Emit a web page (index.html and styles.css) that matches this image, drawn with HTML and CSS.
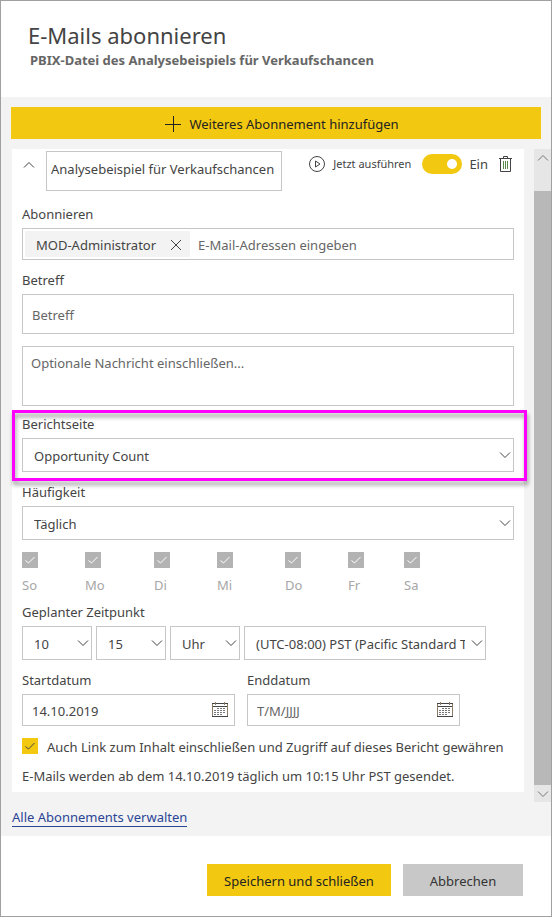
FILE: index.html
```html
<!DOCTYPE html>
<html lang="de">
<head>
<meta charset="utf-8">
<meta name="viewport" content="width=device-width, initial-scale=1">
<title>E-Mails abonnieren</title>
<link rel="stylesheet" href="styles.css">
</head>
<body>
<svg class="defs" aria-hidden="true">
  <symbol id="chevron" viewBox="0 0 12 8"><path d="M1 1.5l5 5 5-5"/></symbol>
  <symbol id="check" viewBox="0 0 16 16"><path d="M3.5 8.5l3 2.5 6-6"/></symbol>
  <symbol id="calendar" viewBox="0 0 18 16">
    <path d="M1 1.500h16M1 4.500h16M1 14.500h16"/>
    <path class="sides" d="M1.500 2v12M16.500 2v12M4.500 0v3M13.500 0v3"/>
    <path class="dots" d="M6 6.500h9M3 8.500h12M3 10.500h12M3 12.500h9" stroke-dasharray="2 1"/>
  </symbol>
</svg>
<main class="dialog">
  <header class="dialog-header">
    <h1>E-Mails abonnieren</h1>
    <h2>PBIX-Datei des Analysebeispiels für Verkaufschancen</h2>
  </header>

  <div class="dialog-body">
    <button type="button" class="button primary add">
      <svg width="16" height="16" viewBox="0 0 16 16"><path d="M8.500 0v16M0 8.500h16"/></svg>
      Weiteres Abonnement hinzufügen
    </button>

    <div class="panel">
      <form class="card">
        <div class="card-head">
          <button type="button" class="icon-button collapse" aria-label="Einklappen"><svg class="flip" width="12" height="8"><use href="#chevron"/></svg></button>
          <input class="box name" type="text" aria-label="Name" value="Analysebeispiel für Verkaufschancen">
          <div class="actions">
            <button type="button" class="run">
              <svg width="16" height="16" viewBox="0 0 16 16"><circle cx="8" cy="8" r="7.500"/><path d="M6.500 5l4.500 3-4.500 3z"/></svg>
              Jetzt ausführen
            </button>
            <label class="switch"><input type="checkbox" role="switch" checked>Ein</label>
            <button type="button" class="icon-button" aria-label="Löschen">
              <svg width="13" height="16" viewBox="0 0 13 16"><path d="M0 2.500h13M4.500 2.500v-2h4v2M1.500 2.500v13h10v-13"/><path class="bars" d="M4.500 5v8M6.500 5v8M8.500 5v8"/></svg>
            </button>
          </div>
        </div>

        <div class="field">
          <label for="mail">Abonnieren</label>
          <div class="box recipients">
            <span class="chip">MOD-Administrator
              <button type="button" class="icon-button" aria-label="Entfernen"><svg width="12" height="12" viewBox="0 0 12 12"><path d="M1 1l10 10M11 1L1 11"/></svg></button>
            </span>
            <input id="mail" type="text" placeholder="E-Mail-Adressen eingeben">
          </div>
        </div>

        <div class="field">
          <label for="subject">Betreff</label>
          <input class="box subject" id="subject" type="text" placeholder="Betreff">
        </div>
        <textarea class="box message" aria-label="Nachricht" placeholder="Optionale Nachricht einschließen..."></textarea>

        <div class="field highlighted">
          <label for="page">Berichtseite</label>
          <div class="select"><select class="box" id="page"><option>Opportunity Count</option></select><svg width="12" height="8"><use href="#chevron"/></svg></div>
        </div>

        <div class="field">
          <label for="frequency">Häufigkeit</label>
          <div class="select"><select class="box" id="frequency"><option>Täglich</option></select><svg width="12" height="8"><use href="#chevron"/></svg></div>
        </div>

        <div class="days">
          <label class="day"><span class="tick"><input type="checkbox" checked disabled><svg><use href="#check"/></svg></span>So</label>
          <label class="day"><span class="tick"><input type="checkbox" checked disabled><svg><use href="#check"/></svg></span>Mo</label>
          <label class="day"><span class="tick"><input type="checkbox" checked disabled><svg><use href="#check"/></svg></span>Di</label>
          <label class="day"><span class="tick"><input type="checkbox" checked disabled><svg><use href="#check"/></svg></span>Mi</label>
          <label class="day"><span class="tick"><input type="checkbox" checked disabled><svg><use href="#check"/></svg></span>Do</label>
          <label class="day"><span class="tick"><input type="checkbox" checked disabled><svg><use href="#check"/></svg></span>Fr</label>
          <label class="day"><span class="tick"><input type="checkbox" checked disabled><svg><use href="#check"/></svg></span>Sa</label>
        </div>

        <div class="field">
          <label for="hour">Geplanter Zeitpunkt</label>
          <div class="times">
            <div class="select"><select class="box" id="hour"><option>10</option></select><svg width="12" height="8"><use href="#chevron"/></svg></div>
            <div class="select"><select class="box" aria-label="Minute"><option>15</option></select><svg width="12" height="8"><use href="#chevron"/></svg></div>
            <div class="select"><select class="box" aria-label="Format"><option>Uhr</option></select><svg width="12" height="8"><use href="#chevron"/></svg></div>
            <div class="select zone"><select class="box" aria-label="Zeitzone"><option>(UTC-08:00) PST (Pacific Standard Time)</option></select><svg width="12" height="8"><use href="#chevron"/></svg></div>
          </div>
        </div>

        <div class="dates">
          <div class="field">
            <label for="start">Startdatum</label>
            <div class="box date"><input id="start" type="text" value="14.10.2019"><button type="button" class="icon-button" aria-label="Startdatum wählen"><svg width="18" height="16"><use href="#calendar"/></svg></button></div>
          </div>
          <div class="field">
            <label for="end">Enddatum</label>
            <div class="box date"><input id="end" type="text" placeholder="T/M/JJJJ"><button type="button" class="icon-button" aria-label="Enddatum wählen"><svg width="18" height="16"><use href="#calendar"/></svg></button></div>
          </div>
        </div>

        <label class="access"><span class="tick"><input type="checkbox" checked><svg><use href="#check"/></svg></span>Auch Link zum Inhalt einschließen und Zugriff auf dieses Bericht gewähren</label>
        <p class="summary">E-Mails werden ab dem 14.10.2019 täglich um 10:15 Uhr PST gesendet.</p>
      </form>

      <div class="scrollbar">
        <button type="button" class="icon-button" aria-label="Nach oben"><svg class="flip" width="10" height="6"><use href="#chevron"/></svg></button>
        <div class="thumb"></div>
        <button type="button" class="icon-button" aria-label="Nach unten"><svg width="10" height="6"><use href="#chevron"/></svg></button>
      </div>
    </div>

    <a class="manage" href="#">Alle Abonnements verwalten</a>
  </div>

  <footer class="dialog-footer">
    <button type="button" class="button primary save">Speichern und schließen</button>
    <button type="button" class="button cancel">Abbrechen</button>
  </footer>
</main>
</body>
</html>
```
FILE: styles.css
```css
* { box-sizing: border-box; }

body {
  margin: 0;
  font: 13px/20px "Noto Sans", "Open Sans", sans-serif;
  color: #444;
}

button, input, select, textarea { font: inherit; color: inherit; margin: 0; }
button { border: 0; padding: 0; background: none; cursor: pointer; }
svg { display: block; fill: none; stroke: #444; }
.defs { position: absolute; width: 0; height: 0; }
.flip { transform: rotate(180deg); }

.dialog {
  min-height: 100vh;
  display: flex;
  flex-direction: column;
  border: 1px solid #a0a0a0;
  background: #fff;
}

.dialog-header { padding: 18px 27px 28px; }
h1 { margin: 0; font-size: 22px; line-height: 32px; font-weight: 400; }
h2 { margin: 0 2px; font-size: 13px; line-height: 18px; font-weight: 700; color: #666; }

.dialog-body { padding: 10px 0 8px 10px; background: #f3f3f3; }

.button { height: 32px; color: #333; }
.primary { background: #f2c811; color: #222; }
.add {
  display: flex;
  align-items: center;
  justify-content: center;
  gap: 8px;
  width: calc(100% - 10px);
  padding: 2px 0 0 12px;
}
.add svg { stroke: #222; }

.panel { display: flex; gap: 10px; margin: 10px 0 5px 1px; }
.card { flex: 1; min-width: 0; margin-bottom: 10px; padding: 2px 10px 6px; background: #fff; }

.box {
  width: 100%;
  border: 1px solid #c6c6c6;
  border-radius: 0;
  background: #fff;
  outline: 0;
}
::placeholder { color: #666; opacity: 1; }

.icon-button { display: grid; place-items: center; }

.card-head { display: flex; align-items: flex-start; }
.collapse { width: 14px; height: 28px; margin-right: 10px; }
.name { width: 236px; height: 40px; padding: 0 4px 4px; }
.actions { display: flex; align-items: center; gap: 11px; height: 26px; margin-left: auto; }
.run { display: flex; align-items: center; gap: 8px; font-size: 11px; }
.switch { display: flex; align-items: center; gap: 7px; }
.switch input {
  appearance: none;
  display: grid;
  align-items: center;
  justify-content: end;
  width: 40px;
  height: 20px;
  padding-right: 5px;
  border-radius: 10px;
  background: #f2c811;
}
.switch input::before { content: ""; width: 10px; height: 10px; border-radius: 50%; background: #fff; }
.actions .icon-button { margin-right: 2px; }
.bars { stroke: #5a8a4a; }
.sides { stroke: #8a7a66; }
.dots { stroke: #777; }

.field { display: flex; flex-direction: column; gap: 4px; margin-top: 10px; }
.card-head + .field { margin-top: 13px; }

.recipients { display: flex; height: 32px; padding: 2px; }
.recipients input { flex: 1; min-width: 0; padding: 2px 8px 0; border: 0; outline: 0; }
.chip { display: flex; align-items: center; gap: 14px; padding: 2px 8px 0 11px; background: #f3f3f3; }

.subject { height: 40px; padding: 2px 9px 0; }
.message { display: block; height: 60px; margin-top: 12px; padding: 6px 8px; resize: none; }

.highlighted { position: relative; margin-top: 8px; }
.highlighted::after {
  content: "";
  position: absolute;
  inset: -4px -13px -9px -10px;
  border: 3px solid #f0f;
  filter: drop-shadow(1px 4px 2px rgba(0, 0, 0, 0.4));
  pointer-events: none;
}

.select { display: grid; align-items: center; }
.select > * { grid-area: 1 / 1; }
.select select { appearance: none; height: 34px; padding: 1px 20px 0 11px; }
.select svg { justify-self: end; margin-right: 3px; pointer-events: none; }

.tick { display: grid; width: 16px; height: 16px; }
.tick > * { grid-area: 1 / 1; width: 16px; height: 16px; margin: 0; }
.tick input { appearance: none; background: #f2c811; }
.tick input:disabled { background: #b3b3b3; }
.tick input:disabled + svg { stroke: #fff; }

.days {
  display: grid;
  grid-template-columns: 63fr 69fr 63fr 68fr 63fr 56fr 110fr;
  margin-top: 12px;
  color: #a6a6a6;
}
.day { display: flex; flex-direction: column; gap: 7px; }
.days + .field { margin-top: 7px; }

.times { display: flex; gap: 4px; }
.times .select { width: 70px; }
.times .zone { width: 242px; }

.dates { display: flex; gap: 12px; }
.dates .field { width: 213px; }
.date { display: flex; align-items: center; height: 32px; padding: 0 5px 0 9px; }
.date input { flex: 1; min-width: 0; padding: 2px 0 0; border: 0; outline: 0; }

.access { display: flex; gap: 9px; margin-top: 12px; line-height: 18px; }
.summary { margin: 10px 0 0; }

.scrollbar { display: flex; flex-direction: column; flex: 0 0 17px; background: #e6e6e6; }
.scrollbar .icon-button { height: 17px; }
.scrollbar svg { width: 12px; height: 8px; stroke: #777; }
.thumb { flex: 1; margin-top: 25px; background: #b8b8b8; }

.manage {
  display: inline-block;
  margin: 0 1px 1px;
  border-bottom: 1px solid #2b4596;
  line-height: 18px;
  color: #2b4596;
  text-decoration: none;
}

.dialog-footer { display: flex; justify-content: flex-end; gap: 12px; padding: 28px 28px 20px; }
.dialog-footer .button { padding-top: 2px; }
.save { width: 184px; }
.cancel { width: 120px; background: #c8c8c8; }
```
